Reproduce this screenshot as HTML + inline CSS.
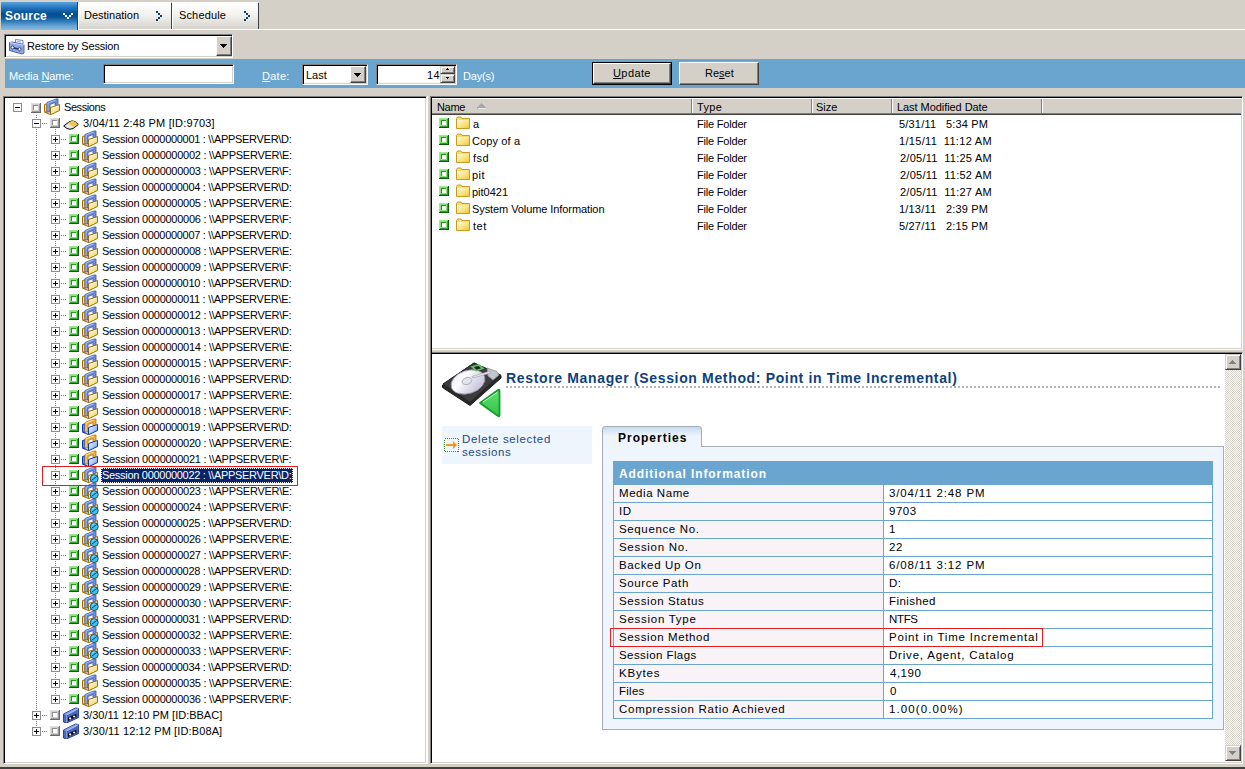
<!DOCTYPE html>
<html><head><meta charset="utf-8">
<style>
*{box-sizing:border-box;margin:0;padding:0}
html,body{width:1245px;height:769px;overflow:hidden;background:#d4d0c8;font-family:"Liberation Sans",sans-serif;font-size:11px;color:#000;position:relative}
.a{position:absolute}
.t{position:absolute;white-space:pre;line-height:13px}
.sunk{position:absolute;border:1px solid;border-color:#808080 #fff #fff #808080;box-shadow:inset 1px 1px 0 #000,inset -1px -1px 0 #d4d0c8;background:#fff}
.btn{position:absolute;background:#d4d0c8;border:1px solid;border-color:#fff #404040 #404040 #fff;box-shadow:inset -1px -1px 0 #808080}
.sb{position:absolute;background:#d4d0c8;border:1px solid;border-color:#d4d0c8 #404040 #404040 #d4d0c8;box-shadow:inset 1px 1px 0 #fff,inset -1px -1px 0 #808080}
.ic{position:absolute;overflow:visible}
.dv{position:absolute;width:1px;background:repeating-linear-gradient(#808080 0 1px,transparent 1px 2px)}
.dh{position:absolute;height:1px;width:6px;background:repeating-linear-gradient(90deg,#808080 0 1px,transparent 1px 2px)}
</style></head>
<body>
<svg width="0" height="0" style="position:absolute">
<defs>
<symbol id="chkG" viewBox="0 0 10 10" shape-rendering="crispEdges">
<rect width="10" height="10" fill="#86e276"/><rect x="0" y="0" width="10" height="1" fill="#9cec8c"/><rect x="0" y="0" width="1" height="10" fill="#9cec8c"/>
<rect x="8" y="1" width="1" height="9" fill="#3a9a36"/><rect x="1" y="8" width="9" height="1" fill="#3a9a36"/>
<rect x="9" y="0" width="1" height="10" fill="#0c5c12"/><rect x="0" y="9" width="10" height="1" fill="#0c5c12"/>
<rect x="2" y="2" width="5" height="5" fill="#2e8a2a"/><rect x="3" y="3" width="4" height="4" fill="#fff"/>
</symbol>
<symbol id="chkS" viewBox="0 0 10 10" shape-rendering="crispEdges">
<rect width="10" height="10" fill="#d0d0d0"/><rect x="0" y="0" width="10" height="1" fill="#e0e0e0"/><rect x="0" y="0" width="1" height="10" fill="#e0e0e0"/>
<rect x="8" y="1" width="1" height="9" fill="#9a9a9a"/><rect x="1" y="8" width="9" height="1" fill="#9a9a9a"/>
<rect x="9" y="0" width="1" height="10" fill="#6a6a6a"/><rect x="0" y="9" width="10" height="1" fill="#6a6a6a"/>
<rect x="2" y="2" width="5" height="5" fill="#8c8c8c"/><rect x="3" y="3" width="4" height="4" fill="#fff"/>
</symbol>
<symbol id="plus" viewBox="0 0 9 9" shape-rendering="crispEdges">
<rect x="0.5" y="0.5" width="8" height="8" fill="#fff" stroke="#8c8c8c"/><rect x="2" y="4" width="5" height="1" fill="#000"/><rect x="4" y="2" width="1" height="5" fill="#000"/>
</symbol>
<symbol id="minus" viewBox="0 0 9 9" shape-rendering="crispEdges">
<rect x="0.5" y="0.5" width="8" height="8" fill="#fff" stroke="#8c8c8c"/><rect x="2" y="4" width="5" height="1" fill="#000"/>
</symbol>
<symbol id="brief" viewBox="0 0 18 18"><path d="M1.5,6.5 L4,5.8 L4,14.5 L1.5,13.8 Z" fill="#f2dc96" stroke="#a66f00" stroke-width="1"/>
<path d="M4,14 L4,4.5 L13,1 L15,1 L15,7.5 L12,7.5 L12,4.5 L7,6.5 L7,14 Z" fill="#6d8ddb" stroke="#3a55a6" stroke-width="0.8"/>
<path d="M5,13.5 L5,5 L12.5,2" fill="none" stroke="#a9c1f2" stroke-width="0.9"/>
<path d="M7.5,9.5 L16.5,6.5 L16.5,12.5 L8,16.5 L7.5,16.5 Z" fill="url(#bg1)" stroke="#a66f00" stroke-width="1"/>
<path d="M1.5,14 L7.5,16.5" stroke="#a66f00" stroke-width="1.2"/></symbol>
<symbol id="briefG" viewBox="0 0 18 18"><path d="M1.5,6.5 L4,5.8 L4,14.5 L1.5,13.8 Z" fill="#f2dc96" stroke="#a66f00" stroke-width="1"/>
<path d="M4,14 L4,4.5 L13,1 L15,1 L15,7.5 L12,7.5 L12,4.5 L7,6.5 L7,14 Z" fill="#6d8ddb" stroke="#3a55a6" stroke-width="0.8"/>
<path d="M5,13.5 L5,5 L12.5,2" fill="none" stroke="#a9c1f2" stroke-width="0.9"/>
<path d="M7.5,9.5 L16.5,6.5 L16.5,12.5 L8,16.5 L7.5,16.5 Z" fill="url(#bg1)" stroke="#a66f00" stroke-width="1"/>
<path d="M1.5,14 L7.5,16.5" stroke="#a66f00" stroke-width="1.2"/>
<circle cx="13.2" cy="12.6" r="4" fill="#41c3f0" stroke="#0b3a6a" stroke-width="0.9"/>
<path d="M10.8,14.2 L15.6,10.6" stroke="#0b3a6a" stroke-width="1"/><path d="M11.5,10.5 L13,9.8" stroke="#b8ecff" stroke-width="0.8"/></symbol>
<symbol id="disc" viewBox="0 0 16 10">
<path d="M0.7,6 L6,2 Q9,0 12,1.5 L15.3,4.5 L10,8.5 Q7,10 4,8.5 Z" fill="#e8e8e8" stroke="#000" stroke-width="1"/>
<path d="M5,3 L9,0.8 Q11,1 12,1.8 L14.7,4.6 L10,7 Z" fill="#f2c64a"/>
</symbol>
<symbol id="tape" viewBox="0 0 16 16">
<path d="M0.5,7 L12.5,1 L15.5,1.5 L15.5,10.5 L3.5,16 L0.5,15 Z" fill="#4d68c0" stroke="#24409a" stroke-width="1" stroke-linejoin="round"/>
<path d="M0.8,7.2 L12.6,1.3 L15.3,1.8 L3.5,8 Z" fill="#8aa4ec"/>
<path d="M3.5,8 L15.3,1.8" stroke="#c0d0ff" stroke-width="0.8"/>
<path d="M3.5,8.5 L3.5,15.5" stroke="#8aa4ec" stroke-width="0.8"/>
<path d="M5,10.5 L13.5,6.5 L13.5,10 L5,14 Z" fill="#0a0a14"/>
<circle cx="7.2" cy="11.4" r="1.1" fill="#fff"/><circle cx="11.2" cy="9.5" r="1.1" fill="#fff"/>
</symbol>
<symbol id="fold" viewBox="0 0 14 13">
<path d="M0.5,2.5 L1.5,1 L5,1 L6,2.5 L13.5,2.5 L13.5,12.5 L0.5,12.5 Z" fill="#f6dd72" stroke="#c99a22"/>
<path d="M1,4 L13,4 L13,12 L1,12 Z" fill="url(#fg)"/>
</symbol>
<linearGradient id="bg1" x1="0" y1="0" x2="1" y2="1"><stop offset="0" stop-color="#fffef0"/><stop offset="0.5" stop-color="#f8e8a8"/><stop offset="1" stop-color="#e8c860"/></linearGradient><linearGradient id="fg" x1="0" y1="0" x2="1" y2="1"><stop offset="0" stop-color="#fffbe0"/><stop offset="0.6" stop-color="#f8e27a"/><stop offset="1" stop-color="#f0c830"/></linearGradient>
<symbol id="combo" viewBox="0 0 18 18">
<path d="M7.5,2.5 L15,3.5 L15,10 L7.5,9 Z" fill="#fff" stroke="#5a86d0"/>
<path d="M9,4.5 L13,5" stroke="#8ab0e8"/>
<path d="M1.5,5.5 L4,5 L16,7.5 L16,16 L14,17 L1.5,13.5 Z" fill="#8ea8e6" stroke="#4a64b0"/>
<path d="M2,5.5 L14,8 L16,7.5" fill="none" stroke="#c8d8ff"/>
<path d="M4,10 L12,11.5 L12,13 L4,11.5 Z" fill="#243070"/>
<circle cx="4.5" cy="10.5" r="1.5" fill="#fff" stroke="#1a2050" stroke-width="0.8"/><circle cx="11.5" cy="12.2" r="1.5" fill="#fff" stroke="#1a2050" stroke-width="0.8"/>
</symbol>
<symbol id="briefB" viewBox="0 0 18 18"><path d="M1.5,6.5 L4,5.8 L4,14.5 L1.5,13.8 Z" fill="#5a8ef0" stroke="#0a3ab0" stroke-width="1"/>
<path d="M4,14 L4,4.5 L13,1 L15,1 L15,7.5 L12,7.5 L12,4.5 L7,6.5 L7,14 Z" fill="#f0b040" stroke="#b07010" stroke-width="0.8"/>
<path d="M5,13.5 L5,5 L12.5,2" fill="none" stroke="#ffe090" stroke-width="0.9"/>
<path d="M7.5,9.5 L16.5,6.5 L16.5,12.5 L8,16.5 L7.5,16.5 Z" fill="url(#bb1)" stroke="#0a3ab0" stroke-width="1"/>
<path d="M1.5,14 L7.5,16.5" stroke="#0a3ab0" stroke-width="1.2"/></symbol>
<linearGradient id="bb1" x1="0" y1="0" x2="1" y2="1"><stop offset="0" stop-color="#ffffff"/><stop offset="0.5" stop-color="#b8ccff"/><stop offset="1" stop-color="#4a78e8"/></linearGradient>
</defs></svg>
<div class="a" style="left:78px;top:29px;width:1167px;height:1px;background:#fff"></div><div class="a" style="left:1px;top:2px;width:76px;height:28px;background:linear-gradient(#5aa5e0 0px,#3a8ad0 3px,#1e6cb4 7px,#004e96 12px,#0a5398 15px,#2a78b8 19px,#6aa4d4 24px,#8cbadf 28px)"></div><div class="a" style="left:77px;top:2px;width:1px;height:28px;background:#404040"></div><div class="t" style="left:5px;top:9px;font:bold 12px 'Liberation Sans';letter-spacing:0.200px;color:#fff">Source</div><svg class="a" style="left:63px;top:13px" width="11" height="7" shape-rendering="crispEdges"><g fill="#fff"><rect x="0" y="0" width="2" height="2"/><rect x="2" y="2" width="2" height="2"/><rect x="4" y="4" width="2" height="2"/><rect x="6" y="2" width="2" height="2"/><rect x="8" y="0" width="2" height="2"/></g></svg><div class="a" style="left:78px;top:2px;width:93px;height:27px;background:linear-gradient(#ffffff,#f3f2ef 45%,#d6d3cc);border-left:1px solid #fff;border-top:1px solid #fff"></div><div class="a" style="left:171px;top:3px;width:1px;height:26px;background:#404040"></div><div class="t" style="left:84px;top:9px;font:11px 'Liberation Sans';letter-spacing:0.000px;color:#000">Destination</div><svg class="a" style="left:156px;top:11px" width="8" height="10" shape-rendering="crispEdges"><g fill="#0b3d78"><rect x="0" y="0" width="2" height="2"/><rect x="2" y="2" width="2" height="2"/><rect x="4" y="4" width="2" height="2"/><rect x="2" y="6" width="2" height="2"/><rect x="0" y="8" width="2" height="2"/></g></svg><div class="a" style="left:172px;top:2px;width:86px;height:27px;background:linear-gradient(#ffffff,#f3f2ef 45%,#d6d3cc);border-left:1px solid #fff;border-top:1px solid #fff"></div><div class="a" style="left:258px;top:3px;width:1px;height:26px;background:#404040"></div><div class="t" style="left:179px;top:9px;font:11px 'Liberation Sans';letter-spacing:0.143px;color:#000">Schedule</div><svg class="a" style="left:244px;top:11px" width="8" height="10" shape-rendering="crispEdges"><g fill="#0b3d78"><rect x="0" y="0" width="2" height="2"/><rect x="2" y="2" width="2" height="2"/><rect x="4" y="4" width="2" height="2"/><rect x="2" y="6" width="2" height="2"/><rect x="0" y="8" width="2" height="2"/></g></svg><div class="sunk" style="left:4px;top:34px;width:229px;height:24px"></div><div class="btn" style="left:216px;top:36px;width:16px;height:20px"></div><svg class="a" style="left:220px;top:44px" width="7" height="4" shape-rendering="crispEdges"><rect x="0" y="0" width="7" height="1"/><rect x="1" y="1" width="5" height="1"/><rect x="2" y="2" width="3" height="1"/><rect x="3" y="3" width="1" height="1"/></svg><svg class="ic" style="left:8px;top:37px" width="18" height="18"><use href="#combo"/></svg><div class="t" style="left:27px;top:40px;font:11px 'Liberation Sans';letter-spacing:-0.176px;color:#000">Restore by Session</div><div class="a" style="left:5px;top:59px;width:1240px;height:29px;background:#6aa5cf"></div><div class="t" style="left:9px;top:70px;font:11px 'Liberation Sans';letter-spacing:-0.100px;color:#fff">Media <u>N</u>ame:</div><div class="sunk" style="left:103px;top:64px;width:131px;height:20px"></div><div class="t" style="left:262px;top:70px;font:11px 'Liberation Sans';letter-spacing:0.250px;color:#fff"><u>D</u>ate:</div><div class="sunk" style="left:302px;top:64px;width:66px;height:21px"></div><div class="btn" style="left:350px;top:66px;width:16px;height:17px"></div><svg class="a" style="left:354px;top:73px" width="7" height="4" shape-rendering="crispEdges"><rect x="0" y="0" width="7" height="1"/><rect x="1" y="1" width="5" height="1"/><rect x="2" y="2" width="3" height="1"/><rect x="3" y="3" width="1" height="1"/></svg><div class="t" style="left:306px;top:69px;font:11px 'Liberation Sans';letter-spacing:0.000px;color:#000">Last</div><div class="sunk" style="left:376px;top:64px;width:81px;height:21px"></div><div class="t" style="left:427px;top:69px;font:11px 'Liberation Sans';letter-spacing:0.500px;color:#000">14</div><div class="sb" style="left:440px;top:66px;width:15px;height:8px"></div><div class="sb" style="left:440px;top:74px;width:15px;height:9px"></div><svg class="a" style="left:446px;top:68px" width="5" height="3" shape-rendering="crispEdges"><rect x="1" y="0" width="1" height="1"/><rect x="0" y="1" width="3" height="1"/></svg><svg class="a" style="left:446px;top:77px" width="5" height="3" shape-rendering="crispEdges"><rect x="0" y="0" width="3" height="1"/><rect x="1" y="1" width="1" height="1"/></svg><div class="t" style="left:463px;top:70px;font:11px 'Liberation Sans';letter-spacing:-0.200px;color:#fff">Day(s)</div><div class="a" style="left:592px;top:62px;width:80px;height:23px;border:1px solid #000;background:#d4d0c8"><div class="btn" style="left:0;top:0;width:78px;height:21px"></div></div><div class="t" style="left:613px;top:67px;font:11px 'Liberation Sans';letter-spacing:0.400px;color:#000"><u>U</u>pdate</div><div class="btn" style="left:679px;top:62px;width:80px;height:23px"></div><div class="t" style="left:705px;top:67px;font:11px 'Liberation Sans';letter-spacing:0.000px;color:#000">Re<u>s</u>et</div><div class="sunk" style="left:3px;top:96px;width:424px;height:668px"></div><div class="a" style="left:427px;top:96px;width:1px;height:668px;background:#fff"></div><div class="dv" style="left:36px;top:115px;height:612px"></div><div class="dv" style="left:55px;top:129px;height:566px"></div><svg class="ic" style="left:13px;top:103px" width="9" height="9"><use href="#minus"/></svg><svg class="ic" style="left:31px;top:103px" width="10" height="10"><use href="#chkS"/></svg><svg class="ic" style="left:43px;top:98px" width="18" height="18"><use href="#brief"/></svg><div class="t" style="left:64px;top:101px;font:11px 'Liberation Sans';letter-spacing:-0.429px;color:#000">Sessions</div><div class="dh" style="left:42px;top:123px"></div><svg class="ic" style="left:32px;top:119px" width="9" height="9"><use href="#minus"/></svg><svg class="ic" style="left:50px;top:118px" width="10" height="10"><use href="#chkS"/></svg><svg class="ic" style="left:63px;top:120px" width="16" height="10"><use href="#disc"/></svg><div class="t" style="left:83px;top:117px;font:11px 'Liberation Sans';letter-spacing:0.167px;color:#000">3/04/11 2:48 PM [ID:9703]</div><div class="dh" style="left:61px;top:139px"></div><svg class="ic" style="left:51px;top:135px" width="9" height="9"><use href="#plus"/></svg><svg class="ic" style="left:69px;top:134px" width="10" height="10"><use href="#chkG"/></svg><svg class="ic" style="left:81px;top:130px" width="18" height="18"><use href="#brief"/></svg><div class="t" style="left:102px;top:133px;font:11px 'Liberation Sans';letter-spacing:-0.294px;color:#000">Session 0000000001 : \\APPSERVER\D:</div><div class="dh" style="left:61px;top:155px"></div><svg class="ic" style="left:51px;top:151px" width="9" height="9"><use href="#plus"/></svg><svg class="ic" style="left:69px;top:150px" width="10" height="10"><use href="#chkG"/></svg><svg class="ic" style="left:81px;top:146px" width="18" height="18"><use href="#brief"/></svg><div class="t" style="left:102px;top:149px;font:11px 'Liberation Sans';letter-spacing:-0.265px;color:#000">Session 0000000002 : \\APPSERVER\E:</div><div class="dh" style="left:61px;top:171px"></div><svg class="ic" style="left:51px;top:167px" width="9" height="9"><use href="#plus"/></svg><svg class="ic" style="left:69px;top:166px" width="10" height="10"><use href="#chkG"/></svg><svg class="ic" style="left:81px;top:162px" width="18" height="18"><use href="#brief"/></svg><div class="t" style="left:102px;top:165px;font:11px 'Liberation Sans';letter-spacing:-0.265px;color:#000">Session 0000000003 : \\APPSERVER\F:</div><div class="dh" style="left:61px;top:187px"></div><svg class="ic" style="left:51px;top:183px" width="9" height="9"><use href="#plus"/></svg><svg class="ic" style="left:69px;top:182px" width="10" height="10"><use href="#chkG"/></svg><svg class="ic" style="left:81px;top:178px" width="18" height="18"><use href="#brief"/></svg><div class="t" style="left:102px;top:181px;font:11px 'Liberation Sans';letter-spacing:-0.294px;color:#000">Session 0000000004 : \\APPSERVER\D:</div><div class="dh" style="left:61px;top:203px"></div><svg class="ic" style="left:51px;top:199px" width="9" height="9"><use href="#plus"/></svg><svg class="ic" style="left:69px;top:198px" width="10" height="10"><use href="#chkG"/></svg><svg class="ic" style="left:81px;top:194px" width="18" height="18"><use href="#brief"/></svg><div class="t" style="left:102px;top:197px;font:11px 'Liberation Sans';letter-spacing:-0.265px;color:#000">Session 0000000005 : \\APPSERVER\E:</div><div class="dh" style="left:61px;top:219px"></div><svg class="ic" style="left:51px;top:215px" width="9" height="9"><use href="#plus"/></svg><svg class="ic" style="left:69px;top:214px" width="10" height="10"><use href="#chkG"/></svg><svg class="ic" style="left:81px;top:210px" width="18" height="18"><use href="#brief"/></svg><div class="t" style="left:102px;top:213px;font:11px 'Liberation Sans';letter-spacing:-0.265px;color:#000">Session 0000000006 : \\APPSERVER\F:</div><div class="dh" style="left:61px;top:235px"></div><svg class="ic" style="left:51px;top:231px" width="9" height="9"><use href="#plus"/></svg><svg class="ic" style="left:69px;top:230px" width="10" height="10"><use href="#chkG"/></svg><svg class="ic" style="left:81px;top:226px" width="18" height="18"><use href="#brief"/></svg><div class="t" style="left:102px;top:229px;font:11px 'Liberation Sans';letter-spacing:-0.294px;color:#000">Session 0000000007 : \\APPSERVER\D:</div><div class="dh" style="left:61px;top:251px"></div><svg class="ic" style="left:51px;top:247px" width="9" height="9"><use href="#plus"/></svg><svg class="ic" style="left:69px;top:246px" width="10" height="10"><use href="#chkG"/></svg><svg class="ic" style="left:81px;top:242px" width="18" height="18"><use href="#brief"/></svg><div class="t" style="left:102px;top:245px;font:11px 'Liberation Sans';letter-spacing:-0.265px;color:#000">Session 0000000008 : \\APPSERVER\E:</div><div class="dh" style="left:61px;top:267px"></div><svg class="ic" style="left:51px;top:263px" width="9" height="9"><use href="#plus"/></svg><svg class="ic" style="left:69px;top:262px" width="10" height="10"><use href="#chkG"/></svg><svg class="ic" style="left:81px;top:258px" width="18" height="18"><use href="#brief"/></svg><div class="t" style="left:102px;top:261px;font:11px 'Liberation Sans';letter-spacing:-0.265px;color:#000">Session 0000000009 : \\APPSERVER\F:</div><div class="dh" style="left:61px;top:283px"></div><svg class="ic" style="left:51px;top:279px" width="9" height="9"><use href="#plus"/></svg><svg class="ic" style="left:69px;top:278px" width="10" height="10"><use href="#chkG"/></svg><svg class="ic" style="left:81px;top:274px" width="18" height="18"><use href="#brief"/></svg><div class="t" style="left:102px;top:277px;font:11px 'Liberation Sans';letter-spacing:-0.294px;color:#000">Session 0000000010 : \\APPSERVER\D:</div><div class="dh" style="left:61px;top:299px"></div><svg class="ic" style="left:51px;top:295px" width="9" height="9"><use href="#plus"/></svg><svg class="ic" style="left:69px;top:294px" width="10" height="10"><use href="#chkG"/></svg><svg class="ic" style="left:81px;top:290px" width="18" height="18"><use href="#brief"/></svg><div class="t" style="left:102px;top:293px;font:11px 'Liberation Sans';letter-spacing:-0.265px;color:#000">Session 0000000011 : \\APPSERVER\E:</div><div class="dh" style="left:61px;top:315px"></div><svg class="ic" style="left:51px;top:311px" width="9" height="9"><use href="#plus"/></svg><svg class="ic" style="left:69px;top:310px" width="10" height="10"><use href="#chkG"/></svg><svg class="ic" style="left:81px;top:306px" width="18" height="18"><use href="#brief"/></svg><div class="t" style="left:102px;top:309px;font:11px 'Liberation Sans';letter-spacing:-0.265px;color:#000">Session 0000000012 : \\APPSERVER\F:</div><div class="dh" style="left:61px;top:331px"></div><svg class="ic" style="left:51px;top:327px" width="9" height="9"><use href="#plus"/></svg><svg class="ic" style="left:69px;top:326px" width="10" height="10"><use href="#chkG"/></svg><svg class="ic" style="left:81px;top:322px" width="18" height="18"><use href="#brief"/></svg><div class="t" style="left:102px;top:325px;font:11px 'Liberation Sans';letter-spacing:-0.294px;color:#000">Session 0000000013 : \\APPSERVER\D:</div><div class="dh" style="left:61px;top:347px"></div><svg class="ic" style="left:51px;top:343px" width="9" height="9"><use href="#plus"/></svg><svg class="ic" style="left:69px;top:342px" width="10" height="10"><use href="#chkG"/></svg><svg class="ic" style="left:81px;top:338px" width="18" height="18"><use href="#brief"/></svg><div class="t" style="left:102px;top:341px;font:11px 'Liberation Sans';letter-spacing:-0.265px;color:#000">Session 0000000014 : \\APPSERVER\E:</div><div class="dh" style="left:61px;top:363px"></div><svg class="ic" style="left:51px;top:359px" width="9" height="9"><use href="#plus"/></svg><svg class="ic" style="left:69px;top:358px" width="10" height="10"><use href="#chkG"/></svg><svg class="ic" style="left:81px;top:354px" width="18" height="18"><use href="#brief"/></svg><div class="t" style="left:102px;top:357px;font:11px 'Liberation Sans';letter-spacing:-0.265px;color:#000">Session 0000000015 : \\APPSERVER\F:</div><div class="dh" style="left:61px;top:379px"></div><svg class="ic" style="left:51px;top:375px" width="9" height="9"><use href="#plus"/></svg><svg class="ic" style="left:69px;top:374px" width="10" height="10"><use href="#chkG"/></svg><svg class="ic" style="left:81px;top:370px" width="18" height="18"><use href="#brief"/></svg><div class="t" style="left:102px;top:373px;font:11px 'Liberation Sans';letter-spacing:-0.294px;color:#000">Session 0000000016 : \\APPSERVER\D:</div><div class="dh" style="left:61px;top:395px"></div><svg class="ic" style="left:51px;top:391px" width="9" height="9"><use href="#plus"/></svg><svg class="ic" style="left:69px;top:390px" width="10" height="10"><use href="#chkG"/></svg><svg class="ic" style="left:81px;top:386px" width="18" height="18"><use href="#brief"/></svg><div class="t" style="left:102px;top:389px;font:11px 'Liberation Sans';letter-spacing:-0.265px;color:#000">Session 0000000017 : \\APPSERVER\E:</div><div class="dh" style="left:61px;top:411px"></div><svg class="ic" style="left:51px;top:407px" width="9" height="9"><use href="#plus"/></svg><svg class="ic" style="left:69px;top:406px" width="10" height="10"><use href="#chkG"/></svg><svg class="ic" style="left:81px;top:402px" width="18" height="18"><use href="#brief"/></svg><div class="t" style="left:102px;top:405px;font:11px 'Liberation Sans';letter-spacing:-0.265px;color:#000">Session 0000000018 : \\APPSERVER\F:</div><div class="dh" style="left:61px;top:427px"></div><svg class="ic" style="left:51px;top:423px" width="9" height="9"><use href="#plus"/></svg><svg class="ic" style="left:69px;top:422px" width="10" height="10"><use href="#chkG"/></svg><svg class="ic" style="left:81px;top:418px" width="18" height="18"><use href="#briefB"/></svg><div class="t" style="left:102px;top:421px;font:11px 'Liberation Sans';letter-spacing:-0.294px;color:#000">Session 0000000019 : \\APPSERVER\D:</div><div class="dh" style="left:61px;top:443px"></div><svg class="ic" style="left:51px;top:439px" width="9" height="9"><use href="#plus"/></svg><svg class="ic" style="left:69px;top:438px" width="10" height="10"><use href="#chkG"/></svg><svg class="ic" style="left:81px;top:434px" width="18" height="18"><use href="#briefB"/></svg><div class="t" style="left:102px;top:437px;font:11px 'Liberation Sans';letter-spacing:-0.265px;color:#000">Session 0000000020 : \\APPSERVER\E:</div><div class="dh" style="left:61px;top:459px"></div><svg class="ic" style="left:51px;top:455px" width="9" height="9"><use href="#plus"/></svg><svg class="ic" style="left:69px;top:454px" width="10" height="10"><use href="#chkG"/></svg><svg class="ic" style="left:81px;top:450px" width="18" height="18"><use href="#briefB"/></svg><div class="t" style="left:102px;top:453px;font:11px 'Liberation Sans';letter-spacing:-0.265px;color:#000">Session 0000000021 : \\APPSERVER\F:</div><div class="dh" style="left:61px;top:475px"></div><svg class="ic" style="left:51px;top:471px" width="9" height="9"><use href="#plus"/></svg><svg class="ic" style="left:69px;top:470px" width="10" height="10"><use href="#chkG"/></svg><svg class="ic" style="left:81px;top:466px" width="18" height="18"><use href="#briefG"/></svg><div class="a" style="left:101px;top:468px;width:192px;height:15px;background:#0a246a;outline:1px dotted #fff;outline-offset:-1px"></div><div class="t" style="left:102px;top:469px;font:11px 'Liberation Sans';letter-spacing:-0.294px;color:#fff">Session 0000000022 : \\APPSERVER\D:</div><div class="dh" style="left:61px;top:491px"></div><svg class="ic" style="left:51px;top:487px" width="9" height="9"><use href="#plus"/></svg><svg class="ic" style="left:69px;top:486px" width="10" height="10"><use href="#chkG"/></svg><svg class="ic" style="left:81px;top:482px" width="18" height="18"><use href="#briefG"/></svg><div class="t" style="left:102px;top:485px;font:11px 'Liberation Sans';letter-spacing:-0.265px;color:#000">Session 0000000023 : \\APPSERVER\E:</div><div class="dh" style="left:61px;top:507px"></div><svg class="ic" style="left:51px;top:503px" width="9" height="9"><use href="#plus"/></svg><svg class="ic" style="left:69px;top:502px" width="10" height="10"><use href="#chkG"/></svg><svg class="ic" style="left:81px;top:498px" width="18" height="18"><use href="#briefG"/></svg><div class="t" style="left:102px;top:501px;font:11px 'Liberation Sans';letter-spacing:-0.265px;color:#000">Session 0000000024 : \\APPSERVER\F:</div><div class="dh" style="left:61px;top:523px"></div><svg class="ic" style="left:51px;top:519px" width="9" height="9"><use href="#plus"/></svg><svg class="ic" style="left:69px;top:518px" width="10" height="10"><use href="#chkG"/></svg><svg class="ic" style="left:81px;top:514px" width="18" height="18"><use href="#briefG"/></svg><div class="t" style="left:102px;top:517px;font:11px 'Liberation Sans';letter-spacing:-0.294px;color:#000">Session 0000000025 : \\APPSERVER\D:</div><div class="dh" style="left:61px;top:539px"></div><svg class="ic" style="left:51px;top:535px" width="9" height="9"><use href="#plus"/></svg><svg class="ic" style="left:69px;top:534px" width="10" height="10"><use href="#chkG"/></svg><svg class="ic" style="left:81px;top:530px" width="18" height="18"><use href="#briefG"/></svg><div class="t" style="left:102px;top:533px;font:11px 'Liberation Sans';letter-spacing:-0.265px;color:#000">Session 0000000026 : \\APPSERVER\E:</div><div class="dh" style="left:61px;top:555px"></div><svg class="ic" style="left:51px;top:551px" width="9" height="9"><use href="#plus"/></svg><svg class="ic" style="left:69px;top:550px" width="10" height="10"><use href="#chkG"/></svg><svg class="ic" style="left:81px;top:546px" width="18" height="18"><use href="#briefG"/></svg><div class="t" style="left:102px;top:549px;font:11px 'Liberation Sans';letter-spacing:-0.265px;color:#000">Session 0000000027 : \\APPSERVER\F:</div><div class="dh" style="left:61px;top:571px"></div><svg class="ic" style="left:51px;top:567px" width="9" height="9"><use href="#plus"/></svg><svg class="ic" style="left:69px;top:566px" width="10" height="10"><use href="#chkG"/></svg><svg class="ic" style="left:81px;top:562px" width="18" height="18"><use href="#briefG"/></svg><div class="t" style="left:102px;top:565px;font:11px 'Liberation Sans';letter-spacing:-0.294px;color:#000">Session 0000000028 : \\APPSERVER\D:</div><div class="dh" style="left:61px;top:587px"></div><svg class="ic" style="left:51px;top:583px" width="9" height="9"><use href="#plus"/></svg><svg class="ic" style="left:69px;top:582px" width="10" height="10"><use href="#chkG"/></svg><svg class="ic" style="left:81px;top:578px" width="18" height="18"><use href="#briefG"/></svg><div class="t" style="left:102px;top:581px;font:11px 'Liberation Sans';letter-spacing:-0.265px;color:#000">Session 0000000029 : \\APPSERVER\E:</div><div class="dh" style="left:61px;top:603px"></div><svg class="ic" style="left:51px;top:599px" width="9" height="9"><use href="#plus"/></svg><svg class="ic" style="left:69px;top:598px" width="10" height="10"><use href="#chkG"/></svg><svg class="ic" style="left:81px;top:594px" width="18" height="18"><use href="#briefG"/></svg><div class="t" style="left:102px;top:597px;font:11px 'Liberation Sans';letter-spacing:-0.265px;color:#000">Session 0000000030 : \\APPSERVER\F:</div><div class="dh" style="left:61px;top:619px"></div><svg class="ic" style="left:51px;top:615px" width="9" height="9"><use href="#plus"/></svg><svg class="ic" style="left:69px;top:614px" width="10" height="10"><use href="#chkG"/></svg><svg class="ic" style="left:81px;top:610px" width="18" height="18"><use href="#briefG"/></svg><div class="t" style="left:102px;top:613px;font:11px 'Liberation Sans';letter-spacing:-0.294px;color:#000">Session 0000000031 : \\APPSERVER\D:</div><div class="dh" style="left:61px;top:635px"></div><svg class="ic" style="left:51px;top:631px" width="9" height="9"><use href="#plus"/></svg><svg class="ic" style="left:69px;top:630px" width="10" height="10"><use href="#chkG"/></svg><svg class="ic" style="left:81px;top:626px" width="18" height="18"><use href="#briefG"/></svg><div class="t" style="left:102px;top:629px;font:11px 'Liberation Sans';letter-spacing:-0.265px;color:#000">Session 0000000032 : \\APPSERVER\E:</div><div class="dh" style="left:61px;top:651px"></div><svg class="ic" style="left:51px;top:647px" width="9" height="9"><use href="#plus"/></svg><svg class="ic" style="left:69px;top:646px" width="10" height="10"><use href="#chkG"/></svg><svg class="ic" style="left:81px;top:642px" width="18" height="18"><use href="#briefG"/></svg><div class="t" style="left:102px;top:645px;font:11px 'Liberation Sans';letter-spacing:-0.265px;color:#000">Session 0000000033 : \\APPSERVER\F:</div><div class="dh" style="left:61px;top:667px"></div><svg class="ic" style="left:51px;top:663px" width="9" height="9"><use href="#plus"/></svg><svg class="ic" style="left:69px;top:662px" width="10" height="10"><use href="#chkG"/></svg><svg class="ic" style="left:81px;top:658px" width="18" height="18"><use href="#brief"/></svg><div class="t" style="left:102px;top:661px;font:11px 'Liberation Sans';letter-spacing:-0.294px;color:#000">Session 0000000034 : \\APPSERVER\D:</div><div class="dh" style="left:61px;top:683px"></div><svg class="ic" style="left:51px;top:679px" width="9" height="9"><use href="#plus"/></svg><svg class="ic" style="left:69px;top:678px" width="10" height="10"><use href="#chkG"/></svg><svg class="ic" style="left:81px;top:674px" width="18" height="18"><use href="#brief"/></svg><div class="t" style="left:102px;top:677px;font:11px 'Liberation Sans';letter-spacing:-0.265px;color:#000">Session 0000000035 : \\APPSERVER\E:</div><div class="dh" style="left:61px;top:699px"></div><svg class="ic" style="left:51px;top:695px" width="9" height="9"><use href="#plus"/></svg><svg class="ic" style="left:69px;top:694px" width="10" height="10"><use href="#chkG"/></svg><svg class="ic" style="left:81px;top:690px" width="18" height="18"><use href="#brief"/></svg><div class="t" style="left:102px;top:693px;font:11px 'Liberation Sans';letter-spacing:-0.265px;color:#000">Session 0000000036 : \\APPSERVER\F:</div><div class="dh" style="left:42px;top:715px"></div><svg class="ic" style="left:32px;top:711px" width="9" height="9"><use href="#plus"/></svg><svg class="ic" style="left:50px;top:710px" width="10" height="10"><use href="#chkS"/></svg><svg class="ic" style="left:63px;top:707px" width="16" height="16"><use href="#tape"/></svg><div class="t" style="left:83px;top:709px;font:11px 'Liberation Sans';letter-spacing:0.000px;color:#000">3/30/11 12:10 PM [ID:BBAC]</div><div class="dh" style="left:42px;top:731px"></div><svg class="ic" style="left:32px;top:727px" width="9" height="9"><use href="#plus"/></svg><svg class="ic" style="left:50px;top:726px" width="10" height="10"><use href="#chkS"/></svg><svg class="ic" style="left:63px;top:723px" width="16" height="16"><use href="#tape"/></svg><div class="t" style="left:83px;top:725px;font:11px 'Liberation Sans';letter-spacing:0.120px;color:#000">3/30/11 12:12 PM [ID:B08A]</div><div class="a" style="left:42px;top:466px;width:256px;height:20px;border:1px solid #e02020"></div><div class="sunk" style="left:430px;top:96px;width:813px;height:254px"></div><div class="a" style="left:432px;top:98px;width:809px;height:16px;background:#d4d0c8;border-top:1px solid #fff;border-bottom:1px solid #808080;box-shadow:0 1px 0 #404040"></div><div class="a" style="left:691px;top:99px;width:1px;height:14px;background:#808080"></div><div class="a" style="left:692px;top:99px;width:1px;height:14px;background:#fff"></div><div class="a" style="left:811px;top:99px;width:1px;height:14px;background:#808080"></div><div class="a" style="left:812px;top:99px;width:1px;height:14px;background:#fff"></div><div class="a" style="left:891px;top:99px;width:1px;height:14px;background:#808080"></div><div class="a" style="left:892px;top:99px;width:1px;height:14px;background:#fff"></div><div class="a" style="left:1041px;top:99px;width:1px;height:14px;background:#808080"></div><div class="a" style="left:1042px;top:99px;width:1px;height:14px;background:#fff"></div><div class="t" style="left:437px;top:101px;font:11px 'Liberation Sans';letter-spacing:-0.333px;color:#000">Name</div><svg class="ic" style="left:477px;top:103px" width="9" height="6" shape-rendering="crispEdges"><path d="M4,0 L5,0 L9,5 L9,6 L0,6 L0,5 Z" fill="#a8a8a8"/><rect x="1" y="5" width="8" height="1" fill="#e8e8e8"/></svg><div class="t" style="left:697px;top:101px;font:11px 'Liberation Sans';letter-spacing:0.333px;color:#000">Type</div><div class="t" style="left:816px;top:101px;font:11px 'Liberation Sans';letter-spacing:0.000px;color:#000">Size</div><div class="t" style="left:897px;top:101px;font:11px 'Liberation Sans';letter-spacing:-0.059px;color:#000">Last Modified Date</div><svg class="ic" style="left:439px;top:118px" width="10" height="10"><use href="#chkG"/></svg><svg class="ic" style="left:456px;top:116px" width="14" height="13"><use href="#fold"/></svg><div class="t" style="left:473px;top:118px;font:11px 'Liberation Sans';letter-spacing:-0.150px;color:#000">a</div><div class="t" style="left:697px;top:118px;font:11px 'Liberation Sans';letter-spacing:-0.200px;color:#000">File Folder</div><div class="t" style="left:899px;top:118px;font:11px 'Liberation Sans';letter-spacing:0.188px;color:#000">5/31/11   5:34 PM</div><svg class="ic" style="left:439px;top:135px" width="10" height="10"><use href="#chkG"/></svg><svg class="ic" style="left:456px;top:133px" width="14" height="13"><use href="#fold"/></svg><div class="t" style="left:472px;top:135px;font:11px 'Liberation Sans';letter-spacing:0.125px;color:#000">Copy of a</div><div class="t" style="left:697px;top:135px;font:11px 'Liberation Sans';letter-spacing:-0.200px;color:#000">File Folder</div><div class="t" style="left:899px;top:135px;font:11px 'Liberation Sans';letter-spacing:0.312px;color:#000">1/15/11  11:12 AM</div><svg class="ic" style="left:439px;top:152px" width="10" height="10"><use href="#chkG"/></svg><svg class="ic" style="left:456px;top:150px" width="14" height="13"><use href="#fold"/></svg><div class="t" style="left:473px;top:152px;font:11px 'Liberation Sans';letter-spacing:0.500px;color:#000">fsd</div><div class="t" style="left:697px;top:152px;font:11px 'Liberation Sans';letter-spacing:-0.200px;color:#000">File Folder</div><div class="t" style="left:900px;top:152px;font:11px 'Liberation Sans';letter-spacing:0.250px;color:#000">2/05/11  11:25 AM</div><svg class="ic" style="left:439px;top:169px" width="10" height="10"><use href="#chkG"/></svg><svg class="ic" style="left:456px;top:167px" width="14" height="13"><use href="#fold"/></svg><div class="t" style="left:472px;top:169px;font:11px 'Liberation Sans';letter-spacing:0.500px;color:#000">pit</div><div class="t" style="left:697px;top:169px;font:11px 'Liberation Sans';letter-spacing:-0.200px;color:#000">File Folder</div><div class="t" style="left:900px;top:169px;font:11px 'Liberation Sans';letter-spacing:0.250px;color:#000">2/05/11  11:52 AM</div><svg class="ic" style="left:439px;top:186px" width="10" height="10"><use href="#chkG"/></svg><svg class="ic" style="left:456px;top:184px" width="14" height="13"><use href="#fold"/></svg><div class="t" style="left:472px;top:186px;font:11px 'Liberation Sans';letter-spacing:0.000px;color:#000">pit0421</div><div class="t" style="left:697px;top:186px;font:11px 'Liberation Sans';letter-spacing:-0.200px;color:#000">File Folder</div><div class="t" style="left:900px;top:186px;font:11px 'Liberation Sans';letter-spacing:0.250px;color:#000">2/05/11  11:27 AM</div><svg class="ic" style="left:439px;top:203px" width="10" height="10"><use href="#chkG"/></svg><svg class="ic" style="left:456px;top:201px" width="14" height="13"><use href="#fold"/></svg><div class="t" style="left:472px;top:203px;font:11px 'Liberation Sans';letter-spacing:-0.083px;color:#000">System Volume Information</div><div class="t" style="left:697px;top:203px;font:11px 'Liberation Sans';letter-spacing:-0.200px;color:#000">File Folder</div><div class="t" style="left:899px;top:203px;font:11px 'Liberation Sans';letter-spacing:0.188px;color:#000">1/13/11   2:39 PM</div><svg class="ic" style="left:439px;top:220px" width="10" height="10"><use href="#chkG"/></svg><svg class="ic" style="left:456px;top:218px" width="14" height="13"><use href="#fold"/></svg><div class="t" style="left:473px;top:220px;font:11px 'Liberation Sans';letter-spacing:0.500px;color:#000">tet</div><div class="t" style="left:697px;top:220px;font:11px 'Liberation Sans';letter-spacing:-0.200px;color:#000">File Folder</div><div class="t" style="left:899px;top:220px;font:11px 'Liberation Sans';letter-spacing:0.188px;color:#000">5/27/11   2:15 PM</div><div class="sunk" style="left:430px;top:352px;width:813px;height:412px"></div><svg class="ic" style="left:438px;top:358px" width="68" height="62">
<defs>
<linearGradient id="plat" x1="0" y1="0" x2="1" y2="1"><stop offset="0" stop-color="#e8e8f2"/><stop offset="0.35" stop-color="#fbfbff"/><stop offset="0.7" stop-color="#d4d2e4"/><stop offset="1" stop-color="#b8b6c8"/></linearGradient>
<linearGradient id="tri" x1="0" y1="0" x2="0" y2="1"><stop offset="0" stop-color="#5ee070"/><stop offset="1" stop-color="#30c448"/></linearGradient>
</defs>
<path d="M4.5,27 L36,5 L63,17.5 L63,20 L32,47.5 L4.5,29.5 Z" fill="#2a2a2a" stroke="#1a1a1a" stroke-width="1" stroke-linejoin="round"/>
<path d="M5,26 L36,5 L62.5,17 L32,44.5 Z" fill="#3c3c3c" stroke="#222" stroke-width="1" stroke-linejoin="round"/>
<ellipse cx="30" cy="24" rx="17.5" ry="11.5" transform="rotate(-18 30 24)" fill="url(#plat)" stroke="#8c8a9c" stroke-width="0.8"/>
<ellipse cx="29" cy="23" rx="5" ry="3.4" transform="rotate(-18 29 23)" fill="#e4e4ee" stroke="#a4a2b4" stroke-width="0.8"/>
<path d="M32.5,8.5 L41,6 L46.5,10.5 L38,13.5 Z" fill="#5cc85c"/><path d="M36,9 L40.5,8 L43,10.3 L38.5,11.8 Z" fill="#1e1e1e"/>
<path d="M49,10 L59,13.5 L61,17 L55,22 L50,18 Z" fill="#c4c4cc" stroke="#8a8a94" stroke-width="0.7"/>
<path d="M34,18.5 L52,13 L53,15 L35,20 Z" fill="#e4e4ec" stroke="#9a9aa4" stroke-width="0.6"/>
<path d="M42,45 L60,32 Q61.5,31 61.5,33 L61.5,57 Q61.5,59 60,58 Z" fill="url(#tri)" stroke="#169a2c" stroke-width="1.8" stroke-linejoin="round"/>
<path d="M45,44 L59,34.5" stroke="#c8f8cc" stroke-width="1"/>
</svg>
<div class="t" style="left:506px;top:370px;font:bold 14px 'Liberation Sans';letter-spacing:0.655px;color:#0f3f7c">Restore Manager (Session Method: Point in Time Incremental)</div><div class="a" style="left:506px;top:386px;width:716px;height:2px;background:repeating-linear-gradient(90deg,#b4b4bc 0 2px,transparent 2px 4px)"></div><div class="a" style="left:442px;top:426px;width:150px;height:38px;background:#eef5fc"></div><svg class="ic" style="left:444px;top:438px" width="15" height="14" shape-rendering="crispEdges"><rect x="0.5" y="0.5" width="14" height="13" fill="none" stroke="#4a8a30" stroke-dasharray="1 1"/><path d="M2,6 L9,6 L9,3 L13,7 L9,11 L9,8 L2,8 Z" fill="#f59a10" shape-rendering="auto"/></svg><div class="t" style="left:462px;top:433px;font:11.5px 'Liberation Sans';letter-spacing:0.643px;color:#1f4b80">Delete selected</div><div class="t" style="left:462px;top:446px;font:11.5px 'Liberation Sans';letter-spacing:0.571px;color:#1f4b80">sessions</div><div class="a" style="left:602px;top:446px;width:622px;height:284px;background:#eef5fc;border:1px solid #a4acb4"></div><div class="a" style="left:602px;top:426px;width:100px;height:21px;background:linear-gradient(#c6dbef,#eef5fc 9px);border:1px solid #a4acb4;border-bottom:none;border-radius:4px 4px 0 0"></div><div class="t" style="left:618px;top:431px;font:bold 12px 'Liberation Sans';letter-spacing:1.000px;color:#000">Properties</div><div class="a" style="left:613px;top:461px;width:600px;height:258px;background:#fff;border:1px solid #6aa5cf"></div><div class="a" style="left:613px;top:461px;width:600px;height:23px;background:#6aa5cf"></div><div class="t" style="left:619px;top:467px;font:bold 12px 'Liberation Sans';letter-spacing:0.905px;color:#fff">Additional Information</div><div class="a" style="left:614px;top:484px;width:269px;height:18px;background:#f7f3f7"></div><div class="a" style="left:613px;top:484px;width:600px;height:1px;background:#6aa5cf"></div><div class="t" style="left:619px;top:487px;font:11.5px 'Liberation Sans';letter-spacing:0.556px;color:#000">Media Name</div><div class="t" style="left:889px;top:487px;font:11.5px 'Liberation Sans';letter-spacing:0.857px;color:#000">3/04/11 2:48 PM</div><div class="a" style="left:614px;top:502px;width:269px;height:18px;background:#f7f3f7"></div><div class="a" style="left:613px;top:502px;width:600px;height:1px;background:#6aa5cf"></div><div class="t" style="left:619px;top:505px;font:11.5px 'Liberation Sans';letter-spacing:0.500px;color:#000">ID</div><div class="t" style="left:889px;top:505px;font:11.5px 'Liberation Sans';letter-spacing:0.500px;color:#000">9703</div><div class="a" style="left:614px;top:520px;width:269px;height:18px;background:#f7f3f7"></div><div class="a" style="left:613px;top:520px;width:600px;height:1px;background:#6aa5cf"></div><div class="t" style="left:619px;top:523px;font:11.5px 'Liberation Sans';letter-spacing:0.636px;color:#000">Sequence No.</div><div class="t" style="left:889px;top:523px;font:11.5px 'Liberation Sans';letter-spacing:0.600px;color:#000">1</div><div class="a" style="left:614px;top:538px;width:269px;height:18px;background:#f7f3f7"></div><div class="a" style="left:613px;top:538px;width:600px;height:1px;background:#6aa5cf"></div><div class="t" style="left:619px;top:541px;font:11.5px 'Liberation Sans';letter-spacing:0.700px;color:#000">Session No.</div><div class="t" style="left:889px;top:541px;font:11.5px 'Liberation Sans';letter-spacing:0.600px;color:#000">22</div><div class="a" style="left:614px;top:556px;width:269px;height:18px;background:#f7f3f7"></div><div class="a" style="left:613px;top:556px;width:600px;height:1px;background:#6aa5cf"></div><div class="t" style="left:619px;top:559px;font:11.5px 'Liberation Sans';letter-spacing:0.636px;color:#000">Backed Up On</div><div class="t" style="left:889px;top:559px;font:11.5px 'Liberation Sans';letter-spacing:0.857px;color:#000">6/08/11 3:12 PM</div><div class="a" style="left:614px;top:574px;width:269px;height:18px;background:#f7f3f7"></div><div class="a" style="left:613px;top:574px;width:600px;height:1px;background:#6aa5cf"></div><div class="t" style="left:619px;top:577px;font:11.5px 'Liberation Sans';letter-spacing:0.600px;color:#000">Source Path</div><div class="t" style="left:889px;top:577px;font:11.5px 'Liberation Sans';letter-spacing:0.500px;color:#000">D:</div><div class="a" style="left:614px;top:592px;width:269px;height:18px;background:#f7f3f7"></div><div class="a" style="left:613px;top:592px;width:600px;height:1px;background:#6aa5cf"></div><div class="t" style="left:619px;top:595px;font:11.5px 'Liberation Sans';letter-spacing:0.615px;color:#000">Session Status</div><div class="t" style="left:889px;top:595px;font:11.5px 'Liberation Sans';letter-spacing:0.429px;color:#000">Finished</div><div class="a" style="left:614px;top:610px;width:269px;height:18px;background:#f7f3f7"></div><div class="a" style="left:613px;top:610px;width:600px;height:1px;background:#6aa5cf"></div><div class="t" style="left:619px;top:613px;font:11.5px 'Liberation Sans';letter-spacing:0.727px;color:#000">Session Type</div><div class="t" style="left:889px;top:613px;font:11.5px 'Liberation Sans';letter-spacing:-0.333px;color:#000">NTFS</div><div class="a" style="left:614px;top:628px;width:269px;height:18px;background:#f7f3f7"></div><div class="a" style="left:613px;top:628px;width:600px;height:1px;background:#6aa5cf"></div><div class="t" style="left:619px;top:631px;font:11.5px 'Liberation Sans';letter-spacing:0.615px;color:#000">Session Method</div><div class="t" style="left:889px;top:631px;font:11.5px 'Liberation Sans';letter-spacing:0.792px;color:#000">Point in Time Incremental</div><div class="a" style="left:614px;top:646px;width:269px;height:18px;background:#f7f3f7"></div><div class="a" style="left:613px;top:646px;width:600px;height:1px;background:#6aa5cf"></div><div class="t" style="left:619px;top:649px;font:11.5px 'Liberation Sans';letter-spacing:0.417px;color:#000">Session Flags</div><div class="t" style="left:889px;top:649px;font:11.5px 'Liberation Sans';letter-spacing:0.800px;color:#000">Drive, Agent, Catalog</div><div class="a" style="left:614px;top:664px;width:269px;height:18px;background:#f7f3f7"></div><div class="a" style="left:613px;top:664px;width:600px;height:1px;background:#6aa5cf"></div><div class="t" style="left:619px;top:667px;font:11.5px 'Liberation Sans';letter-spacing:0.800px;color:#000">KBytes</div><div class="t" style="left:890px;top:667px;font:11.5px 'Liberation Sans';letter-spacing:0.500px;color:#000">4,190</div><div class="a" style="left:614px;top:682px;width:269px;height:18px;background:#f7f3f7"></div><div class="a" style="left:613px;top:682px;width:600px;height:1px;background:#6aa5cf"></div><div class="t" style="left:619px;top:685px;font:11.5px 'Liberation Sans';letter-spacing:0.250px;color:#000">Files</div><div class="t" style="left:890px;top:685px;font:11.5px 'Liberation Sans';letter-spacing:0.600px;color:#000">0</div><div class="a" style="left:614px;top:700px;width:269px;height:18px;background:#f7f3f7"></div><div class="a" style="left:613px;top:700px;width:600px;height:1px;background:#6aa5cf"></div><div class="t" style="left:619px;top:703px;font:11.5px 'Liberation Sans';letter-spacing:0.720px;color:#000">Compression Ratio Achieved</div><div class="t" style="left:889px;top:703px;font:11.5px 'Liberation Sans';letter-spacing:1.100px;color:#000">1.00(0.00%)</div><div class="a" style="left:883px;top:484px;width:1px;height:234px;background:#6aa5cf"></div><div class="a" style="left:610px;top:628px;width:433px;height:19px;border:1px solid #e02020"></div><div class="a" style="left:1225px;top:370px;width:16px;height:375px;background-color:#fff;background-image:repeating-conic-gradient(#d4d0c8 0 25%,#fff 0 50%);background-size:2px 2px"></div><div class="sb" style="left:1225px;top:354px;width:16px;height:16px"></div><svg class="a" style="left:1229px;top:360px" width="7" height="4" shape-rendering="crispEdges"><g fill="#808080"><rect x="3" y="0" width="1" height="1"/><rect x="2" y="1" width="3" height="1"/><rect x="1" y="2" width="5" height="1"/><rect x="0" y="3" width="7" height="1"/></g></svg><div class="sb" style="left:1225px;top:745px;width:16px;height:16px"></div><svg class="a" style="left:1229px;top:751px" width="7" height="4" shape-rendering="crispEdges"><g fill="#808080"><rect x="0" y="0" width="7" height="1"/><rect x="1" y="1" width="5" height="1"/><rect x="2" y="2" width="3" height="1"/><rect x="3" y="3" width="1" height="1"/></g></svg><div class="a" style="left:430px;top:347px;width:1px;height:8px;background:#808080"></div><div class="a" style="left:431px;top:347px;width:1px;height:8px;background:#000"></div><div class="a" style="left:0;top:767px;width:1245px;height:2px;background:#404040"></div>
</body></html>
